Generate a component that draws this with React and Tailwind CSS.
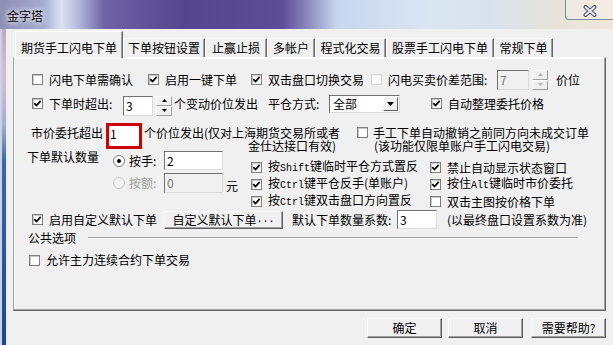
import React from "react";

const M = ({ children }) => <span className="font-['Liberation_Mono',monospace] text-[10px]">{children}</span>;

function Box({ on, faint }) {
  return (
    <span
      className={
        faint
          ? "flex h-[11px] w-[11px] shrink-0 items-center justify-center border border-[#d2d2d2] bg-white"
          : "flex h-[11px] w-[11px] shrink-0 items-center justify-center border border-[#7f7f7f] bg-white shadow-[inset_1px_1px_0_#c8c8c8]"
      }
    >
      {on ? (
        <svg width="9" height="9" viewBox="0 0 9 9">
          <path d="M1.3 4.1 L3.5 6.5 L7.7 1.8" fill="none" stroke="#000" strokeWidth="1.8" />
        </svg>
      ) : null}
    </span>
  );
}

function Check({ on, faint, className = "", children }) {
  return (
    <div className={`flex items-center ${className}`}>
      <Box on={on} faint={faint} />
      <span className="ml-[6px] whitespace-nowrap">{children}</span>
    </div>
  );
}

function Radio({ on, disabled }) {
  return (
    <span
      className={
        disabled
          ? "flex h-[12px] w-[12px] shrink-0 items-center justify-center rounded-full border border-[#c6c6c6] bg-[#f4f4f4]"
          : "flex h-[12px] w-[12px] shrink-0 items-center justify-center rounded-full border border-[#7f7f7f] bg-white"
      }
    >
      {on ? <span className="h-[4px] w-[4px] rounded-full bg-black" /> : null}
    </span>
  );
}

function Field({ value, disabled, className = "" }) {
  return (
    <div
      className={`flex shrink-0 items-center border border-t-[#717171] border-l-[#717171] border-r-[#dadada] border-b-[#dadada] pl-[2px] ${
        disabled ? "bg-[#f0f0f0] text-[#7a7a7a]" : "bg-white"
      } ${className}`}
    >
      {value}
    </div>
  );
}

function Arrow({ up, color }) {
  return (
    <svg width="5" height="3" viewBox="0 0 5 3">
      <path d={up ? "M0 3 L2.5 0 L5 3 Z" : "M0 0 L5 0 L2.5 3 Z"} fill={color} />
    </svg>
  );
}

function Spin({ disabled, className = "" }) {
  const c = disabled ? "#b0b0b0" : "#000";
  return (
    <div className={`flex h-[20px] w-[16px] shrink-0 flex-col ${className}`}>
      <div className="flex h-[10px] items-center justify-center border border-t-white border-l-white border-r-[#a0a0a0] border-b-[#a0a0a0] bg-[#f0f0f0]">
        <Arrow up color={c} />
      </div>
      <div className="flex h-[10px] items-center justify-center border border-t-white border-l-white border-r-[#a0a0a0] border-b-[#a0a0a0] bg-[#f0f0f0]">
        <Arrow color={c} />
      </div>
    </div>
  );
}

function Btn({ className = "", children }) {
  return (
    <div
      className={`flex shrink-0 items-center justify-center border border-t-white border-l-white border-r-[#5f5f5f] border-b-[#5f5f5f] bg-[#f0f0f0] shadow-[inset_-1px_-1px_0_#a0a0a0] ${className}`}
    >
      {children}
    </div>
  );
}

const TABS = [
  ["下单按钮设置", "w-[82px]"],
  ["止赢止损", "w-[62px]"],
  ["多帐户", "w-[48px]"],
  ["程式化交易", "w-[71px]"],
  ["股票手工闪电下单", "w-[108px]"],
  ["常规下单", "w-[59px]"],
];

export default function App() {
  return (
    <div className="flex h-[345px] w-[613px] flex-col overflow-hidden bg-[#f0f0f0] font-['Noto_Sans_CJK_SC',sans-serif] text-[12px] leading-[14px] text-black">
      {/* aero caption */}
      <div className="flex h-[29px] shrink-0 items-start justify-between bg-[linear-gradient(to_right,#8e8db3_0%,#a3abd2_7%,#dae3f3_10%,#b0b4d8_13%,#6f63a6_17%,#54458e_30%,#5d4c97_46%,#8a85bb_50%,#c7d6ee_55%,#dbe6f3_70%,#d8e2ee_80%,#e9e4d8_92%,#efe6dc_100%)]">
        <span className="ml-[7px] mt-[9px] [text-shadow:0_0_5px_#fff,0_0_8px_#fff]">金字塔</span>
        <div className="-mr-[2px] flex h-[20px] w-[50px] shrink-0 items-center justify-center rounded-b-[4px] border border-t-0 border-[#7d8898] bg-white/25 pt-[3px]">
          <svg width="16" height="12" viewBox="0 0 16 12">
            <path d="M3.5 2 L12.5 10 M12.5 2 L3.5 10" stroke="#4a5564" strokeWidth="4" strokeLinecap="round" />
            <path d="M3.5 2 L12.5 10 M12.5 2 L3.5 10" stroke="#f2f2f2" strokeWidth="1.8" strokeLinecap="round" />
          </svg>
        </div>
      </div>

      <div className="flex flex-1">
        {/* left frame */}
        <div className="w-[7px] shrink-0 bg-[linear-gradient(to_bottom,#c3a6c2_0%,#dcbccb_15%,#a6b0d6_30%,#3a66b0_42%,#1d4590_100%)] shadow-[inset_2px_0_0_#c9d3e6,inset_-1px_0_0_#e8eef8]" />

        {/* client */}
        <div className="flex flex-1 flex-col pt-[2px]">
          <div className="ml-[8px] flex h-[26px] items-end">
            <div className="relative z-10 -mb-px flex h-[27px] w-[108px] items-center justify-center border-l border-t border-r border-l-white border-t-white border-r-[#696969] bg-[#f0f0f0] pt-[7px] pb-[1px] shadow-[inset_-1px_0_0_#a0a0a0]">
              期货手工闪电下单
            </div>
            {TABS.map(([t, w]) => (
              <div
                key={t}
                className={`flex h-[19px] items-center justify-center border-l border-t border-r border-l-white border-t-white border-r-[#696969] shadow-[inset_-1px_0_0_#a0a0a0] ${w}`}
              >
                {t}
              </div>
            ))}
          </div>

          <div className="ml-[6px] flex h-[254px] w-[593px] flex-col border border-t-white border-l-[#a0a0a0] border-r-[#696969] border-b-[#696969] shadow-[inset_-1px_-1px_0_#a0a0a0,inset_1px_1px_0_#fff]">
            {/* row 1 */}
            <div className="mt-[11px] flex h-[21px] items-center pl-[18px]">
              <Check className="w-[116px]">闪电下单需确认</Check>
              <Check on className="w-[103px]">启用一键下单</Check>
              <Check on className="w-[120px]">双击盘口切换交易</Check>
              <Check faint className="w-[126px]">闪电买卖价差范围:</Check>
              <Field disabled value="7" className="h-[20px] w-[32px]" />
              <Spin disabled className="ml-[3px]" />
              <span className="ml-[8px]">价位</span>
            </div>

            {/* row 2 */}
            <div className="mt-[3px] flex h-[21px] items-center pl-[18px]">
              <Check on className="w-[91px]">下单时超出:</Check>
              <Field value="3" className="mt-[4px] h-[20px] w-[30px]" />
              <Spin className="ml-[3px] mt-[4px]" />
              <span className="ml-[2px] w-[94px] whitespace-nowrap">个变动价位发出</span>
              <span className="w-[61px] whitespace-nowrap">平仓方式:</span>
              <div className="flex h-[18px] w-[71px] items-center justify-between border border-t-[#717171] border-l-[#717171] border-r-[#dadada] border-b-[#dadada] bg-white pl-[3px] pr-[1px]">
                <span>全部</span>
                <div className="flex h-[14px] w-[15px] items-center justify-center border border-t-white border-l-white border-r-[#5f5f5f] border-b-[#5f5f5f] bg-[#f0f0f0]">
                  <svg width="7" height="4" viewBox="0 0 7 4">
                    <path d="M0 0 L7 0 L3.5 4 Z" fill="#000" />
                  </svg>
                </div>
              </div>
              <Check on className="ml-[31px]">自动整理委托价格</Check>
            </div>

            {/* row 3 */}
            <div className="mt-[9px] flex h-[27px] items-start pl-[17px]">
              <span className="mt-[3px] w-[75px] whitespace-nowrap">市价委托超出</span>
              <div className="flex h-[26px] w-[36px] shrink-0 items-start border-[3px] border-[#d10000] bg-white pl-[1px] pt-[1px]">
                1
              </div>
              <div className="mt-[3px] w-[198px] whitespace-nowrap text-right leading-[13px]">
                <div>个价位发出(仅对上海期货交易所或者</div>
                <div className="pr-[4px]">金仕达接口有效)</div>
              </div>
              <div className="ml-[17px] mt-[4px]">
                <Box />
              </div>
              <div className="ml-[5px] mt-[3px] whitespace-nowrap leading-[13px]">
                <div>手工下单自动撤销之前同方向未成交订单</div>
                <div className="pl-[1px]">(该功能仅限单账户手工闪电交易)</div>
              </div>
            </div>

            {/* quantity block */}
            <div className="flex h-[60px] items-start pl-[13px]">
              <span className="w-[86px] whitespace-nowrap">下单默认数量</span>
              <div className="mt-[1px] flex w-[138px] flex-col">
                <div className="flex h-[19px] items-center">
                  <Radio on />
                  <span className="ml-[4px] w-[35px]">按手:</span>
                  <Field value="2" className="h-[19px] w-[59px]" />
                </div>
                <div className="mt-[3px] flex h-[20px] items-center">
                  <Radio disabled />
                  <span className="ml-[4px] w-[35px] text-[#a0a0a0]">按额:</span>
                  <Field disabled value="0" className="h-[20px] w-[59px]" />
                  <span className="ml-[3px] mt-[6px]">元</span>
                </div>
              </div>
              <div className="mt-[9px] grid grid-cols-[179px_1fr] auto-rows-[17px] items-center">
                <Check on>
                  按<M>Shift</M>键临时平仓方式置反
                </Check>
                <Check on>禁止自动显示状态窗口</Check>
                <Check on>
                  按<M>Ctrl</M>键平仓反手(单账户)
                </Check>
                <Check on>
                  按住<M>Alt</M>键临时市价委托
                </Check>
                <Check on>
                  按<M>Ctrl</M>键双击盘口方向置反
                </Check>
                <Check>双击主图按价格下单</Check>
              </div>
            </div>

            {/* row 5 */}
            <div className="flex h-[19px] items-center pl-[18px]">
              <Check on className="w-[132px]">启用自定义默认下单</Check>
              <Btn className="h-[18px] w-[119px]">
                自定义默认下单<M>...</M>
              </Btn>
              <span className="ml-[9px] w-[105px] whitespace-nowrap">默认下单数量系数:</span>
              <Field value="3" className="h-[19px] w-[40px]" />
              <span className="ml-[10px] whitespace-nowrap">(以最终盘口设置系数为准)</span>
            </div>

            {/* group */}
            <div className="mt-[2px] flex h-[14px] items-center pl-[14px]">
              <span className="w-[48px] whitespace-nowrap">公共选项</span>
              <div className="ml-[12px] h-[2px] w-[490px] border-t border-b border-t-[#a0a0a0] border-b-white" />
            </div>

            <div className="mt-[6px] flex h-[18px] items-center pl-[15px]">
              <Check>允许主力连续合约下单交易</Check>
            </div>
          </div>

          {/* dialog buttons */}
          <div className="mt-[7px] flex justify-end pr-[7px]">
            <Btn className="h-[20px] w-[75px]">确定</Btn>
            <Btn className="ml-[6px] h-[20px] w-[75px]">取消</Btn>
            <Btn className="ml-[8px] h-[20px] w-[75px]">需要帮助?</Btn>
          </div>
        </div>
      </div>
    </div>
  );
}
